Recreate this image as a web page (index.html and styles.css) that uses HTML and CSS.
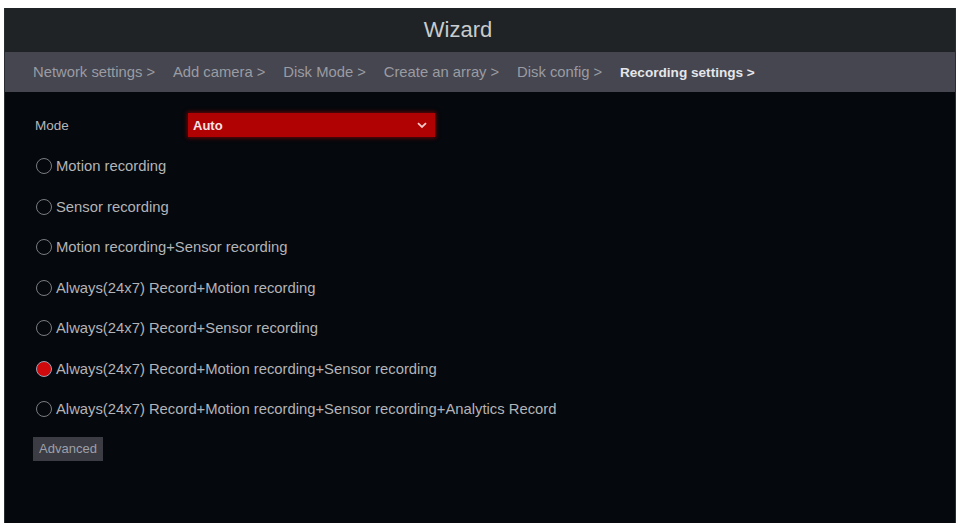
FILE: index.html
```html
<!DOCTYPE html>
<html>
<head>
<meta charset="utf-8">
<link rel="stylesheet" href="styles.css">
</head>
<body>
<div class="frame">
  <header class="title-bar">Wizard</header>
  <nav class="steps">
    <span class="step">Network settings &gt;</span>
    <span class="step">Add camera &gt;</span>
    <span class="step">Disk Mode &gt;</span>
    <span class="step">Create an array &gt;</span>
    <span class="step">Disk config &gt;</span>
    <span class="step current">Recording settings &gt;</span>
  </nav>
  <main class="content">
    <div class="mode-row">
      <span class="label">Mode</span>
      <div class="select">
        <span>Auto</span>
        <svg class="chev" width="10" height="7" viewBox="0 0 10 7"><path d="M1 1.2 L5 5 L9 1.2" fill="none" stroke="#f3c9c9" stroke-width="1.8"/></svg>
      </div>
    </div>
    <ul class="options">
      <li class="opt"><span class="radio"></span>Motion recording</li>
      <li class="opt"><span class="radio"></span>Sensor recording</li>
      <li class="opt"><span class="radio"></span>Motion recording+Sensor recording</li>
      <li class="opt"><span class="radio"></span>Always(24x7) Record+Motion recording</li>
      <li class="opt"><span class="radio"></span>Always(24x7) Record+Sensor recording</li>
      <li class="opt"><span class="radio on"></span>Always(24x7) Record+Motion recording+Sensor recording</li>
      <li class="opt"><span class="radio"></span>Always(24x7) Record+Motion recording+Sensor recording+Analytics Record</li>
    </ul>
    <button class="adv">Advanced</button>
  </main>
</div>
</body>
</html>
```

FILE: styles.css
```css
html, body {
  margin: 0;
  padding: 0;
  background: #ffffff;
  width: 960px;
  height: 523px;
  overflow: hidden;
  font-family: "Liberation Sans", Arial, sans-serif;
}
.frame {
  margin: 8px 4px 0 4px;
  height: 515px;
  background: #05080c;
  display: flex;
  flex-direction: column;
  border-left: 1px solid #2a2d31;
  border-right: 1px solid #2a2d31;
}
.title-bar {
  height: 44px;
  background: #1f2326;
  color: #c9cbcd;
  font-size: 22px;
  display: flex;
  align-items: center;
  justify-content: center;
  padding-right: 44px;
}
.steps {
  height: 40px;
  background: #45464f;
  display: flex;
  align-items: center;
  padding-left: 28px;
  gap: 17.8px;
  font-size: 14.8px;
  color: #9b9ca3;
}
.step.current {
  color: #e6e6ea;
  font-weight: bold;
  font-size: 13.6px;
}
.content {
  flex: 1;
  padding: 21px 0 0 30px;
}
.mode-row {
  display: flex;
  align-items: center;
  height: 24px;
}
.label {
  color: #b5b6ba;
  font-size: 13.5px;
  width: 153px;
}
.select {
  width: 247px;
  height: 24px;
  background: #b10203;
  box-shadow: 0 0 4px 1px rgba(200, 0, 0, 0.55);
  display: flex;
  align-items: center;
  justify-content: space-between;
  padding: 0 8px 0 5px;
  box-sizing: border-box;
  color: #f6e4e4;
  font-size: 13px;
  font-weight: bold;
}
.options {
  list-style: none;
  margin: 9px 0 0 0;
  padding: 0;
}
.opt {
  height: 40.5px;
  display: flex;
  align-items: center;
  color: #b3b4b8;
  font-size: 14.8px;
}
.radio {
  width: 14px;
  height: 14px;
  border: 1.5px solid #7a7c80;
  border-radius: 50%;
  margin: 0 4px 0 1px;
  box-sizing: content-box;
}
.radio.on {
  background: #d0090c;
  border-color: #9aa0b4;
}
.adv {
  margin-top: 7px;
  margin-left: -2px;
  height: 24px;
  padding: 0 3px;
  width: 70px;
  background: #3b3c44;
  border: none;
  color: #9fa0a8;
  font-family: "Liberation Sans", Arial, sans-serif;
  font-size: 13px;
}
```
